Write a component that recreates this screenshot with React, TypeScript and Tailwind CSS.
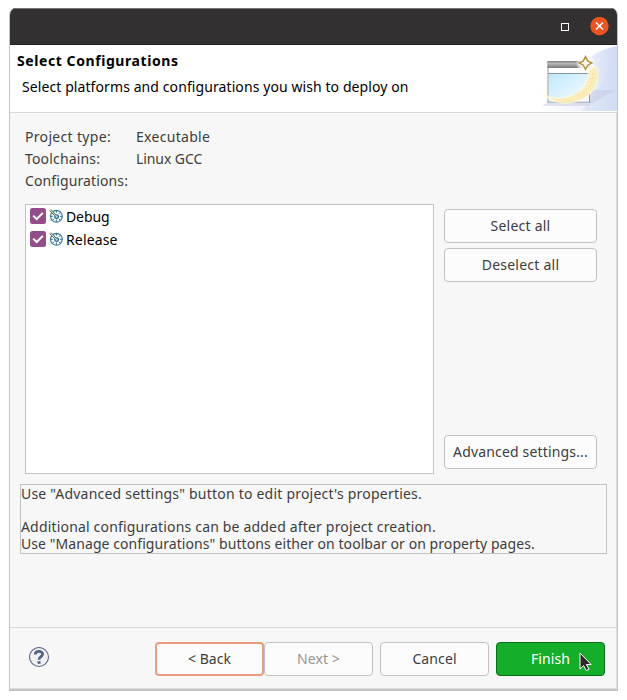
import React from "react";

function Btn({ className = "", children }: { className?: string; children: React.ReactNode }) {
  return (
    <button className={"flex h-[34px] items-center justify-center rounded-[4px] border pb-px whitespace-pre " + className}>
      {children}
    </button>
  );
}

const plain = "border-[#c2c2c2] bg-[#fcfcfc]";

function BuildIcon() {
  return (
    <svg width="14" height="14" viewBox="0 0 14 14" className="mr-[3px] ml-[3px] shrink-0">
      <circle cx="7.4" cy="7.3" r="5.9" fill="#f4fafc" stroke="#3f7694" strokeWidth="1.1" />
      <path d="M7.4 1.5v2.2M7.4 10.5v2.4M10.8 7.3h2.3M1.7 7.3h2.2M11.4 3.2 9.8 4.8M9.7 9.6l1.7 1.7M5.1 9.6l-1.7 1.7" stroke="#3c7390" strokeWidth="1" />
      <circle cx="7.6" cy="7.6" r="1.9" fill="#a9d3e6" stroke="#1f5a8a" strokeWidth="1.1" />
      <path d="M1.2 1 7.2 7.2" stroke="#e6e0a8" strokeWidth="1.8" />
      <path d="M.7 1.7 6.6 7.4M2.1.6l5.2 5.8" stroke="#27506a" strokeWidth="0.8" />
    </svg>
  );
}

function ConfigRow({ label, className }: { label: string; className: string }) {
  return (
    <div className="flex h-[23px] items-center pb-px text-black">
      <svg width="16" height="16" viewBox="0 0 16 16" className="shrink-0">
        <rect width="16" height="16" rx="2.5" fill="#924d8b" />
        <path d="M3.2 7.6 6.7 11 12.9 4.9" fill="none" stroke="#fff" strokeWidth="2" />
      </svg>
      <BuildIcon />
      <span className={className}>{label}</span>
    </div>
  );
}

function Banner() {
  return (
    <svg width="75" height="66" viewBox="0 0 75 66" className="shrink-0">
      <defs>
        <linearGradient id="sky" x1="0" x2="1" y1="0" y2="0">
          <stop offset="0" stopColor="#fff" />
          <stop offset="0.55" stopColor="#eef2fb" />
          <stop offset="1" stopColor="#d0dbf2" />
        </linearGradient>
        <linearGradient id="pane" x1="0" x2="1" y1="0" y2="1">
          <stop offset="0" stopColor="#c2e8fb" />
          <stop offset="1" stopColor="#f6fcff" />
        </linearGradient>
        <linearGradient id="bar" x1="0" x2="0" y1="0" y2="1">
          <stop offset="0" stopColor="#7c7c7c" />
          <stop offset="0.35" stopColor="#b8b8b8" />
          <stop offset="1" stopColor="#777" />
        </linearGradient>
        <linearGradient id="swoosh" x1="0" x2="1" y1="0" y2="0">
          <stop offset="0" stopColor="#fff5c8" stopOpacity="0.5" />
          <stop offset="0.3" stopColor="#fbecb6" />
          <stop offset="1" stopColor="#faedbd" />
        </linearGradient>
        <radialGradient id="glow">
          <stop offset="0" stopColor="#fff" />
          <stop offset="0.6" stopColor="#fff" stopOpacity="0.85" />
          <stop offset="1" stopColor="#fff" stopOpacity="0" />
        </radialGradient>
      </defs>
      <path d="M75 1C60 4 49 10 41 19C30 36 18 55 0 66H75Z" fill="url(#sky)" />
      <path d="M75 16C64 22 61 46 39 66H75Z" fill="#d3ddf4" opacity="0.5" />
      <path d="M0 61h46l26-16H50L6 57Z" fill="#c5c8df" opacity="0.5" />
      <rect x="6" y="17" width="41.5" height="40" fill="#fff" stroke="#8c969d" />
      <rect x="5.5" y="16" width="42.5" height="7" fill="url(#bar)" />
      <path d="M6 28.5h41" stroke="#8196a3" />
      <rect x="7" y="29" width="40" height="27.5" fill="url(#pane)" />
      <path d="M0 48C11 56 26 55 37 47C45 41 47 33 47 25Q50 20 55 23C58 35 53 45 45 51C31 61 12 60 0 48Z" fill="#fff8dc" stroke="#fffbe9" strokeWidth="2" opacity="0.7" />
      <path d="M0 48C11 56 26 55 37 47C45 41 47 33 47 25Q50 20 55 23C58 35 53 45 45 51C31 61 12 60 0 48Z" fill="url(#swoosh)" />
      <path d="M37 51C46 46 51 38 51.5 27" fill="none" stroke="#efdfa2" strokeWidth="1.3" strokeDasharray="1.5 3" />
      <circle cx="43.5" cy="18" r="10" fill="url(#glow)" />
      <path d="M43.5 11.7 45.7 15.9 49.8 18 45.7 20.2 43.5 24.3 41.3 20.2 37.2 18 41.3 15.9Z" fill="#fff9e5" stroke="#b29440" strokeWidth="1.5" />
    </svg>
  );
}

export default function App() {
  return (
    <div className="h-[700px] w-[627px] bg-white pt-[8px] pl-[9px] font-['Noto_Sans','Open_Sans',sans-serif] text-[14px] leading-[17px] text-[#3d3d3d]">
      <div className="flex h-[683px] w-[609px] flex-col overflow-hidden rounded-t-[7px] border-r border-b-2 border-l border-[#c3c3c3] bg-[#f7f7f7]">
        <div className="flex h-[37px] shrink-0 items-center justify-end border-t border-b border-t-[#777] border-b-[#1f1f1f] bg-[#333031] pr-[8px]">
          <div className="mr-[21px] size-[8px] border border-white" />
          <svg width="19" height="19" viewBox="0 0 19 19">
            <circle cx="9.5" cy="9" r="9.2" fill="#e95420" />
            <path d="m6 5.5 7 7m0-7-7 7" stroke="#fff" strokeWidth="1.5" />
          </svg>
        </div>
        <header className="flex h-[68px] shrink-0 justify-between border-b border-[#dadada] bg-white text-black">
          <div className="pt-[7px] pl-[7px] whitespace-nowrap">
            <h1 className="text-[14px] font-bold tracking-[0.58px]">Select Configurations</h1>
            <p className="mt-[9px] ml-[5px] tracking-[0.09px]">Select platforms and configurations you wish to deploy on</p>
          </div>
          <Banner />
        </header>
        <main className="flex h-[515px] shrink-0 flex-col border-r border-b border-[#dadada]">
          <dl className="mt-[13px] ml-[15px] grid grid-cols-[111px_1fr] leading-[22px] whitespace-nowrap">
            <dt className="tracking-[0.32px]">Project type:</dt>
            <dd className="tracking-[0.3px]">Executable</dd>
            <dt className="tracking-[0.16px]">Toolchains:</dt>
            <dd className="tracking-[-0.08px]">Linux GCC</dd>
            <dt className="tracking-[0.12px]">Configurations:</dt>
          </dl>
          <div className="mt-[12px] ml-[15px] flex h-[270px] gap-[10px]">
            <div className="w-[409px] border border-[#c2c2c2] bg-white pl-[4px]">
              <ConfigRow label="Debug" className="tracking-[-0.1px]" />
              <ConfigRow label="Release" className="tracking-[0.14px]" />
            </div>
            <div className="flex w-[153px] flex-col pt-[5px] pb-[5px]">
              <Btn className={"tracking-[0.22px] " + plain}>Select all</Btn>
              <Btn className={"mt-[5px] tracking-[0.24px] " + plain}>Deselect all</Btn>
              <Btn className={"mt-auto tracking-[0.16px] " + plain}>Advanced settings...</Btn>
            </div>
          </div>
          <div className="mt-[10px] ml-[10px] grid h-[70px] w-[587px] grid-rows-[33px_17px_17px] border border-[#c2c2c2] leading-[17px] whitespace-nowrap">
            <p className="tracking-[0.215px]">Use "Advanced settings" button to edit project's properties.</p>
            <p className="tracking-[0.175px]">Additional configurations can be added after project creation.</p>
            <p className="tracking-[0.07px]">Use "Manage configurations" buttons either on toolbar or on property pages.</p>
          </div>
        </main>
        <footer className="flex grow items-start border-r border-b border-[#e0e0e0] pt-[14px] pl-[19px]">
          <svg width="21" height="21" viewBox="0 0 21 21" className="mt-[5px] mr-[105px]">
            <circle cx="10" cy="10" r="9.5" fill="#f1f1f1" stroke="#5c6c8b" strokeWidth="1.1" />
            <path d="M6.3 7.6C6.3 3.4 13.6 3.5 13.6 7.1C13.6 9.8 10 9.6 10 12.8" fill="none" stroke="#516487" strokeWidth="2.7" />
            <rect x="8.6" y="14.2" width="2.9" height="2.6" fill="#516487" />
          </svg>
          <Btn className="w-[109px] border-2 border-[#eb9c80] bg-[#fcfcfc]">{"< Back"}</Btn>
          <Btn className={"w-[109px] tracking-[0.1px] text-[#969696] " + plain}>{"Next >"}</Btn>
          <Btn className={"ml-[7px] w-[109px] tracking-[0.1px] " + plain}>Cancel</Btn>
          <div className="relative ml-[7px]">
            <Btn className="w-[109px] border-[#0b6f18] bg-[#14ae2b] tracking-[0.1px] text-white">Finish</Btn>
            <svg width="13" height="20" viewBox="0 0 13 20" className="absolute top-[10px] left-[83px]">
              <path d="M1 1v16l3.6-3.4 2.7 5 2.7-1.3-2.6-4.8h4.8Z" fill="#2a2a2a" stroke="#fff" strokeWidth="1" />
            </svg>
          </div>
        </footer>
      </div>
    </div>
  );
}
